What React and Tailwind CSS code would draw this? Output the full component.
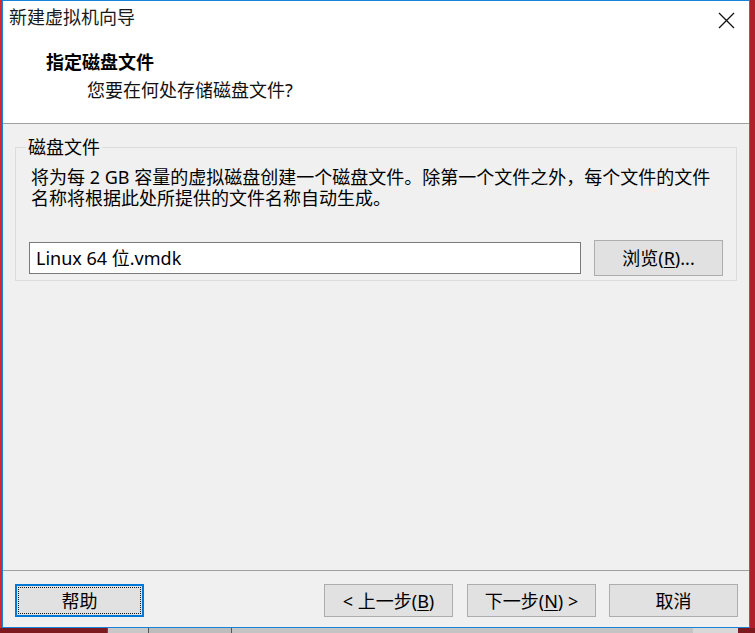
import React from 'react';

const Btn = ({ children, focused = false, className = '' }) => (
  <button
    className={`relative flex h-[33px] w-[129px] items-center justify-center bg-[#e1e1e1] text-[18px] leading-none text-black ${
      focused ? 'border-2 border-[#0078d7]' : 'border border-[#adadad]'
    } ${className}`}
  >
    {focused && (
      <span className="pointer-events-none absolute inset-[1px] border border-dotted border-[#1a1a1a]" />
    )}
    {children}
  </button>
);

const Key = ({ children }) => <span className="underline underline-offset-2">{children}</span>;

export default function App() {
  return (
    <div className="flex h-[633px] w-[755px] flex-col overflow-hidden bg-[#a8232b] font-['Noto_Sans','Noto_Sans_CJK_SC',sans-serif] text-black">
      <div className="flex h-[628px]">
        <div className="w-[2px] bg-[#d42a2f]" />

        {/* dialog window */}
        <div className="flex w-[748px] flex-col border border-[#1883d7] bg-[#f0f0f0]">
          {/* title bar + wizard header */}
          <div className="h-[122px] bg-white">
            <div className="flex h-[32px] items-center justify-between pl-[6px] pr-[14px]">
              <span className="text-[18px] leading-6 text-[#1a1a1a]">新建虚拟机向导</span>
              <svg width="17" height="17" viewBox="0 0 17 17" className="mt-[6px]">
                <path d="M1 1 L16 16 M16 1 L1 16" stroke="#111" strokeWidth="1.3" fill="none" />
              </svg>
            </div>
            <div className="mt-[17px] pl-[43px]">
              <div className="text-[18px] font-bold leading-6">指定磁盘文件</div>
              <div className="mt-[4px] pl-[41px] text-[18px] leading-6 text-[#111]">您要在何处存储磁盘文件?</div>
            </div>
          </div>
          <div className="h-px bg-[#a0a0a0]" />

          {/* body */}
          <div className="flex flex-1 flex-col">
            <fieldset className="ml-[12px] mr-[13px] mt-[13px] border border-[#dcdcdc] pb-[4px] pl-[13px] pr-[13px]">
              <legend className="-ml-[3px] px-[2px] text-[18px] leading-5">磁盘文件</legend>
              <p className="mt-[10px] pl-[2px] text-[18px] leading-[21px]">
                将为每 2 GB 容量的虚拟磁盘创建一个磁盘文件。除第一个文件之外，每个文件的文件
                <br />
                名称将根据此处所提供的文件名称自动生成。
              </p>
              <div className="mt-[31px] flex items-center gap-[13px]">
                <div className="flex h-[32px] w-[552px] items-center border border-[#7a7a7a] bg-white pl-[6px] text-[18px] leading-none">
                  Linux 64 位.vmdk
                </div>
                <Btn className="h-[36px] w-[128px]">
                  浏览(<Key>R</Key>)...
                </Btn>
              </div>
            </fieldset>

            {/* footer */}
            <div className="mt-auto">
              <div className="h-px bg-[#a0a0a0]" />
              <div className="flex items-center pb-[10px] pl-[12px] pr-[11px] pt-[13px]">
                <Btn focused>帮助</Btn>
                <Btn className="ml-auto">
                  &lt; 上一步(<Key>B</Key>)
                </Btn>
                <Btn className="ml-[14px]">
                  下一步(<Key>N</Key>) &gt;
                </Btn>
                <Btn className="ml-[13px]">取消</Btn>
              </div>
            </div>
          </div>
        </div>

        <div className="flex-1 bg-[#b01f2a]" />
      </div>

      {/* desktop / taskbar strip behind dialog */}
      <div className="flex flex-1">
        <div className="w-[107px] bg-[#7d1a1f]" />
        <div className="w-px bg-[#555]" />
        <div className="w-[40px] bg-[#c8c8c8]" />
        <div className="w-px bg-[#555]" />
        <div className="w-[82px] bg-[#bdbdbd]" />
        <div className="w-px bg-[#555]" />
        <div className="flex-1 bg-[#c4c4c4]" />
        <div className="w-[45px] bg-[#d8d8d8]" />
        <div className="w-[17px] bg-[#7d1a1f]" />
      </div>
    </div>
  );
}
